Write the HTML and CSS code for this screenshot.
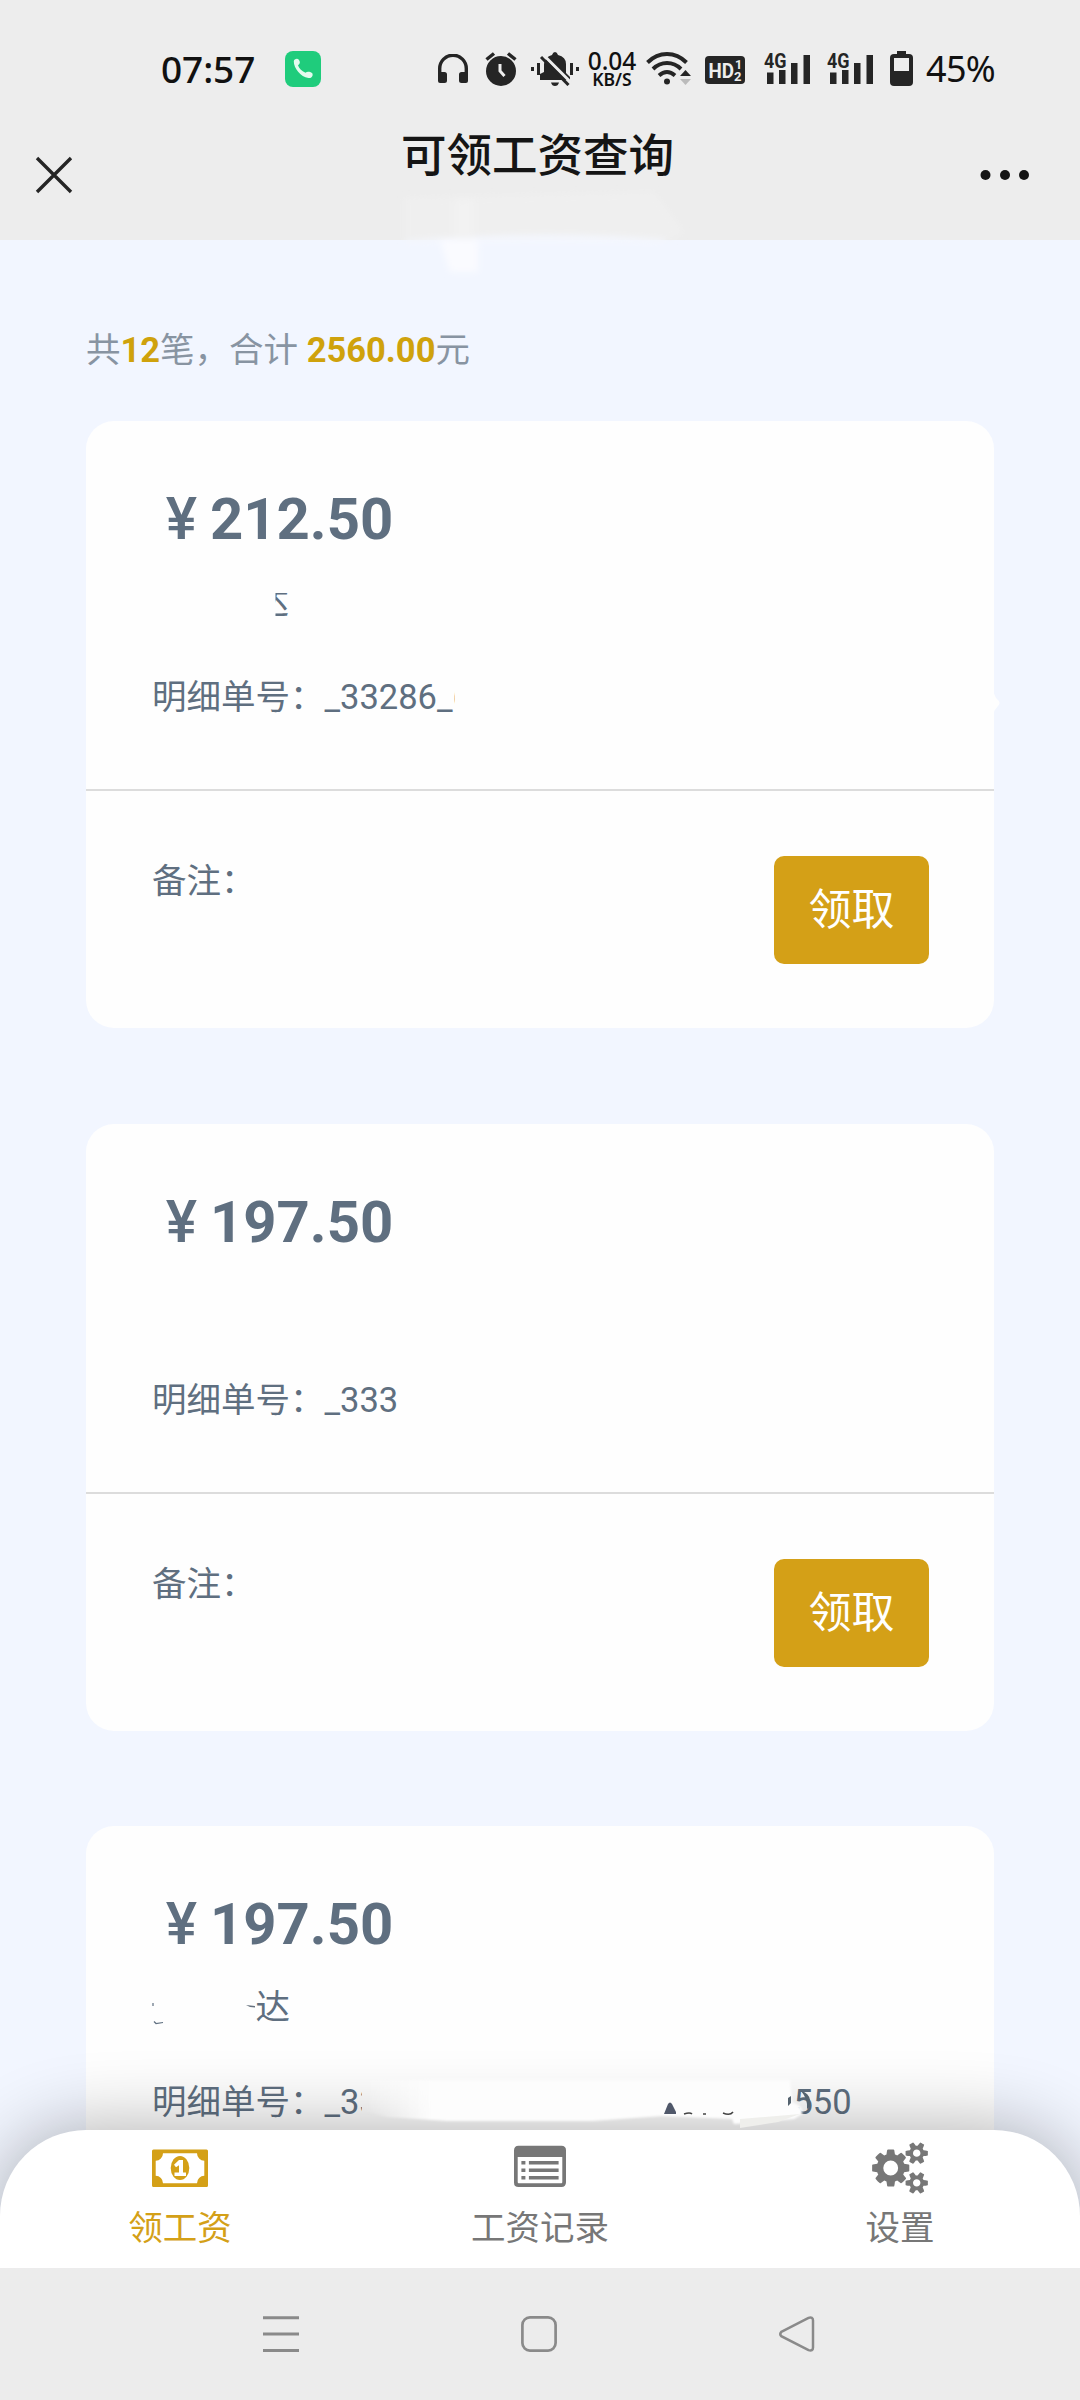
FILE: index.html
```html
<!DOCTYPE html>
<html lang="zh-CN">
<head>
<meta charset="utf-8">
<title>可领工资查询</title>
<link rel="stylesheet" href="styles.css">
</head>
<body>
<div class="phone">
  <header class="header">
    <div class="status">
      <span class="clock">07:57</span>
      <svg class="call" width="36" height="36" viewBox="0 0 36 36"><rect width="36" height="36" rx="8" fill="#1fcc7c"/><path d="M8.800 10.500c0-2.500 3.700-3.500 5-1.800 1.600 2.200 1.500 4-.8 5.500 1 2.800 3.500 6 7.500 7.500 1.700-1.500 4.700-1 6.500.3 1.500 1.500.5 5.500-3.500 5C15.500 26 8.800 17 8.800 10.500z" fill="#e4fbef"/></svg>
      <div class="indicators">
        <svg class="i-head" width="30" height="30" viewBox="0 0 30 30"><path d="M1.700 24V14.500a13.300 13.300 0 0 1 26.600 0V24" fill="none" stroke="#252525" stroke-width="3.400"/><path d="M0 18h6.500q2.500 0 2.500 2.500v6q0 2.500-2.500 2.500H2q-2 0-2-2zM30 18h-6.500q-2.500 0-2.500 2.500v6q0 2.500 2.500 2.500H28q2 0 2-2z" fill="#252525"/></svg>
        <svg class="i-alarm" width="32" height="34" viewBox="0 0 32 34"><circle cx="16" cy="19" r="15" fill="#252525"/><path d="M1.500 7.500L9 1.500M30.500 7.500L23 1.500" stroke="#252525" stroke-width="3.500"/><path d="M15 12v7l4.500 5" fill="none" stroke="#eee" stroke-width="3"/></svg>
        <svg class="i-bell" width="48" height="34" viewBox="0 0 48 34"><path d="M9 28v-6l4-2v-8q1-7 8-9 1-3 3-3t3 3q8 2 8 9v9l4 4v3z" fill="#252525"/><path d="M20 30.500h8q-1 3.500-4 3.500t-4-3.500zM0 15h3v4H0zM6 11h3v12H6zM39 11h3v12h-3zM45 15h3v4h-3z" fill="#252525"/><path d="M13 3.500l27 27" stroke="#ededed" stroke-width="3"/><path d="M10 5l27.500 28" stroke="#252525" stroke-width="3"/></svg>
        <div class="speed"><span class="speed-n">0.04</span><span class="speed-u">KB/S</span></div>
        <svg class="i-wifi" width="45" height="33" viewBox="0 0 45 33"><g fill="none" stroke="#252525" stroke-width="3.900"><path d="M1.500 10.500Q10 2 21 2t19.500 8.500"/><path d="M7 17q6-6 14-6t14 6"/><path d="M13 23.500q4-3.500 8-3.500t8 3.500"/></g><circle cx="21" cy="29.500" r="3" fill="#252525"/><path d="M34 24l5.500-6 5.500 6z" fill="#252525"/><path d="M34 27l5.500 6 5.500-6z" fill="#bbb"/></svg>
        <svg class="i-hd" width="40" height="28" viewBox="0 0 40 28"><rect width="40" height="28" rx="4" fill="#252525"/><g fill="#ededed" font-family="Roboto" font-weight="700"><text x="3.500" y="21.500" font-size="21" textLength="25.500" lengthAdjust="spacingAndGlyphs">HD</text><text x="30" y="13" font-size="12.500">1</text><text x="29" y="24.500" font-size="13">2</text></g></svg>
        <svg class="i-sig" width="47" height="39" viewBox="0 -6 47 39"><text x="0" y="15.500" font-family="Roboto" font-weight="700" font-size="20" textLength="22.500" lengthAdjust="spacingAndGlyphs" fill="#252525">4G</text><path d="M3 20.500h6.500V32H3zM15 18h6.500v14H15zM27 11h6.500v21H27zM39.500 3H46v29h-6.500z" fill="#252525"/></svg>
        <svg class="i-sig" width="47" height="39" viewBox="0 -6 47 39"><text x="0" y="15.500" font-family="Roboto" font-weight="700" font-size="20" textLength="22.500" lengthAdjust="spacingAndGlyphs" fill="#252525">4G</text><path d="M3 20.500h6.500V32H3zM15 18h6.500v14H15zM27 11h6.500v21H27zM39.500 3H46v29h-6.500z" fill="#252525"/></svg>
        <svg class="i-bat" width="23" height="35" viewBox="0 0 23 35"><path d="M7 0h9v4H7z" fill="#252525"/><rect y="3" width="23" height="32" rx="4" fill="#252525"/><path d="M4 7h15v13H4z" fill="#ededed"/></svg>
        <span class="pct">45%</span>
      </div>
    </div>
    <div class="titlebar">
      <svg class="close" width="38" height="38" viewBox="0 0 38 38"><path d="M2 2l34 34M36 2L2 36" stroke="#252525" stroke-width="3.400"/></svg>
      <h1 class="title">可领工资查询</h1>
      <svg class="more" width="50" height="12" viewBox="0 0 50 12" fill="#151515"><circle cx="5.500" cy="6" r="5"/><circle cx="25" cy="6" r="5"/><circle cx="44" cy="6" r="5"/></svg>
    </div>
    <svg class="header-smudge" width="300" height="100" viewBox="0 0 300 100"><defs><filter id="soft"><feGaussianBlur stdDeviation="3"/></filter></defs><g filter="url(#soft)"><path d="M14 14l250-6 30 40-14 8H14z" fill="#f2f2f2" opacity=".4"/><path d="M15 57q80-6 140-6t120 5v4H15z" fill="#f4f7fe"/><path d="M50 56h38v32H60z" fill="#fafbff"/><path d="M64 15h20v40H64z" fill="#f4f4f4" opacity=".6"/></g></svg>
  </header>

  <main class="content">
    <p class="summary">共<b>12</b>笔，合计 <b>2560.00</b>元</p>

    <section class="card">
      <div class="card-top">
        <div class="amount"><span class="yen">¥</span>212.50</div>
        <div class="name"><span class="last half">达</span></div>
        <div class="detail"><span>明细单号：_33286_</span><span class="sliver">6</span></div>
        <svg class="edge-nub" width="10" height="24" viewBox="0 0 10 24"><path d="M0 0q2 8 5 10 3 3 0 6-3 3-5 8z" fill="#fefefe"/></svg>
      </div>
      <div class="card-bottom"><span class="remark">备注：</span><button class="claim">领取</button></div>
    </section>

    <section class="card">
      <div class="card-top">
        <div class="amount"><span class="yen">¥</span>197.50</div>
        <div class="name"></div>
        <div class="detail"><span>明细单号：_333</span></div>
      </div>
      <div class="card-bottom"><span class="remark">备注：</span><button class="claim">领取</button></div>
    </section>

    <section class="card">
      <div class="card-top">
        <div class="amount"><span class="yen">¥</span>197.50</div>
        <div class="name"><svg class="dash" width="104" height="40" viewBox="0 0 104 40"><path d="M1 16v3M2 34.500l2 2 7-1" stroke="#5f6f80" stroke-width="1.200" fill="none"/><path d="M94 18l9 1v1.500l-5-.5z" fill="#66717e"/></svg><span class="last">达</span></div>
        <div class="detail"><span>明细单号：_3</span><span class="sliver">3</span><span class="tail">550</span></div>
      </div>
      <div class="card-bottom"><span class="remark">备注：</span><button class="claim">领取</button></div>
    </section>
  </main>

  <footer class="footer">
    <nav class="tabs">
      <a class="tab active">
        <svg width="56" height="52" viewBox="0 0 56 52"><path fill-rule="evenodd" d="M1.500 7.500h53Q56 7.500 56 9v34.500q0 1.500-1.500 1.500h-53Q0 45 0 43.500V9Q0 7.500 1.500 7.500zM11 11.200a7.500 7.500 0 0 1-7.300 7.500v15.100A7.500 7.500 0 0 1 11 41.300h34a7.500 7.500 0 0 1 7.300-7.500V18.700A7.500 7.500 0 0 1 45 11.200z" fill="currentColor"/><ellipse cx="28" cy="26" rx="9.300" ry="12" fill="currentColor"/><path d="M27 18h4v12.500h3V34H22.500v-3.500H27v-7.200l-3 2-2-2.600z" fill="#fff"/></svg>
        <span>领工资</span>
      </a>
      <a class="tab">
        <svg width="52" height="52" viewBox="0 0 52 52" fill="currentColor"><path fill-rule="evenodd" d="M4.600 3.700h42.800Q52 3.700 52 8.300v32Q52 45 47.400 45H4.600Q0 45 0 40.400v-32Q0 3.700 4.600 3.700zM3.700 15v25q0 1.300 1 1.300h42.600q1 0 1-1.300V15z"/><path d="M7.400 19h4v3.500h-4zM7.400 26.500h4V30h-4zM7.400 34h4v3.500h-4zM14.900 19h29.700v3.500H14.900zM14.900 26.500h29.700V30H14.900zM14.900 34h29.700v3.500H14.900z"/></svg>
        <span>工资记录</span>
      </a>
      <a class="tab">
        <svg width="56" height="52" viewBox="0 0 1920 1792" fill="currentColor"><path d="M896 896q0-106-75-181t-181-75-181 75-75 181 75 181 181 75 181-75 75-181zm768 512q0-52-38-90t-90-38-90 38-38 90q0 53 37.500 90.500t90.500 37.500 90.500-37.500 37.500-90.500zm0-1024q0-52-38-90t-90-38-90 38-38 90q0 53 37.500 90.500t90.500 37.500 90.500-37.500 37.500-90.500zm-384 421v185q0 10-7 19.500t-16 10.500l-155 24q-11 35-32 76 34 48 90 115 7 11 7 20 0 12-7 19-23 30-82.500 89.500t-78.500 59.500q-11 0-21-7l-115-90q-37 19-77 31-11 108-23 155-7 24-30 24h-186q-11 0-20-7.500t-10-17.500l-23-153q-34-10-75-31l-118 89q-7 7-20 7-11 0-21-8-144-133-144-160 0-9 7-19 10-14 41-53t47-61q-23-44-35-82l-152-24q-10-1-17-9.500t-7-19.500v-185q0-10 7-19.500t16-10.500l155-24q11-35 32-76-34-48-90-115-7-11-7-20 0-12 7-20 22-30 82-89t79-59q11 0 21 7l115 90q34-18 77-32 11-108 23-154 7-24 30-24h186q11 0 20 7.500t10 17.500l23 153q34 10 75 31l118-89q8-7 20-7 11 0 21 8 144 133 144 160 0 8-7 19-12 16-42 54t-45 60q23 48 34 82l152 23q10 2 17 10.500t7 19.500zm640 533v140q0 16-149 31-12 27-30 52 51 113 51 138 0 4-4 7-122 71-124 71-8 0-46-47t-52-68q-20 2-30 2t-30-2q-14 21-52 68t-46 47q-2 0-124-71-4-3-4-7 0-25 51-138-18-25-30-52-149-15-149-31v-140q0-16 149-31 13-29 30-52-51-113-51-138 0-4 4-7 4-2 35-20t59-34 30-16q8 0 46 46.500t52 67.500q20-2 30-2t30 2q51-71 92-112l6-2q4 0 124 70 4 3 4 7 0 25-51 138 17 23 30 52 149 15 149 31zm0-1024v140q0 16-149 31-12 27-30 52 51 113 51 138 0 4-4 7-122 71-124 71-8 0-46-47t-52-68q-20 2-30 2t-30-2q-14 21-52 68t-46 47q-2 0-124-71-4-3-4-7 0-25 51-138-18-25-30-52-149-15-149-31v-140q0-16 149-31 13-29 30-52-51-113-51-138 0-4 4-7 4-2 35-20t59-34 30-16q8 0 46 46.500t52 67.500q20-2 30-2t30 2q51-71 92-112l6-2q4 0 124 70 4 3 4 7 0 25-51 138 17 23 30 52 149 15 149 31z"/></svg>
        <span>设置</span>
      </a>
    </nav>
    <svg class="row-smudge" width="460" height="70" viewBox="0 0 460 70"><defs><filter id="soft2" x="-5%" y="-20%" width="110%" height="140%"><feGaussianBlur stdDeviation="1.200"/></filter><linearGradient id="fade" x1="0" y1="0" x2="1" y2="0"><stop offset="0" stop-color="#fdfdfd" stop-opacity="0"/><stop offset=".15" stop-color="#fdfdfd"/></linearGradient></defs><path d="M8 20h424l2 22q12 4 10 12l-8 5-60 5-2-5-70-3-70 5H90l-60-4-22-5z" fill="url(#fade)" filter="url(#soft2)"/><path d="M382 59l60-5-22 8-38 6z" fill="#efefec"/><path d="M306 54l4-10q2-3 4 0l4 8v2z" fill="#50586a"/><path d="M326 54q6-2 8 0M345 54h3M365 53q7 3 10-1" stroke="#444" stroke-width="1.500" fill="none"/><path d="M430 38l3-2v7l-3 3zM443 31q8 2 9 9t-3 9q1-10-6-18z" fill="#55636f"/></svg>
    <div class="sysnav">
      <svg width="36" height="36" viewBox="0 0 36 36"><path d="M0 1.700h36M0 18h36M0 34.500h36" stroke="#8a8a8a" stroke-width="3"/></svg>
      <svg width="36" height="36" viewBox="0 0 36 36"><rect x="1.400" y="1.400" width="33.200" height="33.200" rx="7.500" fill="none" stroke="#8a8a8a" stroke-width="2.700"/></svg>
      <svg width="36" height="36" viewBox="0 0 36 36"><path d="M2.300 15.800L29.500 1.900Q34 .5 34 4.500v27q0 4-4.500 2.600L2.300 20.200q-2-2.200 0-4.400z" fill="none" stroke="#8a8a8a" stroke-width="2.500"/></svg>
    </div>
  </footer>
</div>
</body>
</html>
```
FILE: styles.css
```css
* { box-sizing: border-box; }
body { margin: 0; font-family: Roboto, "Noto Sans CJK SC", sans-serif; }
svg { display: block; flex: none; }

.phone {
  position: relative;
  display: flex;
  flex-direction: column;
  width: 1080px;
  height: 2400px;
  overflow: hidden;
  background: #f2f6ff;
}

/* header */
.header { position: relative; flex: none; height: 240px; background: #ededed; }
.status { display: flex; height: 120px; padding: 51px 0 0 161px; color: #111; }
.clock { width: 124px; font: 500 37px/36px "Noto Sans", sans-serif; letter-spacing: -.1px; white-space: nowrap; }
.indicators { display: flex; margin-left: 117px; align-items: flex-start; }
.i-head { margin-top: 3px; }
.i-alarm { margin: 1px 0 0 17px; }
.i-bell { margin: 1px 0 0 14px; }
.speed { display: flex; flex-direction: column; width: 54px; margin-left: 6px; align-items: center; font-family: "Noto Sans", sans-serif; font-weight: 600; white-space: nowrap; }
.speed-n { font-size: 24.500px; font-weight: 500; line-height: 19px; }
.speed-u { font-size: 17.500px; line-height: 18px; }
.i-wifi { margin: 1px 0 0 7px; }
.i-hd { margin: 5px 0 0 14px; }
.i-sig { margin: -5px 0 0 19px; }
.i-sig + .i-sig { margin-left: 16px; }
.i-bat { margin-left: 16px; }
.pct { margin-left: 13px; font: 400 36px/36px "Noto Sans", sans-serif; letter-spacing: -.7px; }
.titlebar { display: flex; justify-content: space-between; padding: 0 50px 0 35px; }
.close { margin-top: 36px; }
.title { margin: 5px 0 0 22px; font-size: 45.500px; font-weight: 500; line-height: 64px; color: #151515; }
.more { margin-top: 49px; }
.header-smudge { position: absolute; left: 390px; top: 184px; }

/* list */
.content { flex: none; padding: 80px 86px 0; }
.summary { margin: 0 0 41px; font-size: 34.500px; line-height: 60px; color: #8894a2; }
.summary b { color: #cfa20c; }
.card { height: 607px; margin-bottom: 95.500px; border-radius: 28px; background: #fefefe; color: #5f6f80; }
.card-top { position: relative; height: 370px; padding: 58px 66px 0; border-bottom: 2px solid #dcdcdc; }
.amount { display: flex; font-size: 58px; font-weight: 700; line-height: 80px; }
.yen { width: 58px; text-align: center; font-size: 59px; font-weight: 500; text-indent: 1px; }
.name { display: flex; align-items: center; height: 62px; margin-top: 12px; padding-left: 102.500px; font-size: 34.500px; line-height: 62px; }
.half { clip-path: inset(22px 0 12px 21px); }
.dash { margin-left: -103px; }
.detail { display: flex; margin-top: 33px; font-size: 34.500px; line-height: 62px; white-space: nowrap; }
.sliver { width: 2.500px; overflow: hidden; }
.tail { margin-left: 431.500px; }
.edge-nub { position: absolute; left: 907px; top: 269px; }
.card-bottom { display: flex; justify-content: space-between; padding: 65px 65px 0 66px; }
.remark { height: 62px; margin-top: -6px; font-size: 34.500px; line-height: 62px; }
.claim { width: 155px; height: 108px; padding: 0; border: 0; border-radius: 10px; background: #d4a017; color: #fff; font: 400 43px/108px Roboto, "Noto Sans CJK SC", sans-serif; }

/* bottom bars */
.footer { position: absolute; left: 0; right: 0; bottom: 0; }
.tabs { display: grid; grid-template-columns: repeat(3, 1fr); height: 138px; border-radius: 86px 86px 0 0; background: #fff; box-shadow: 0 0 76px rgba(0, 0, 0, .32); }
.tab { display: flex; flex-direction: column; align-items: center; padding-top: 11.500px; color: #777; font-size: 34.500px; line-height: 60px; }
.tab span { margin-top: 4px; }
.active { color: #d4a017; }
.row-smudge { position: absolute; left: 358px; top: -70px; }
.sysnav { position: relative; display: flex; justify-content: space-between; height: 132px; padding: 48px 265px 0 263px; background: #ececec; }
```
